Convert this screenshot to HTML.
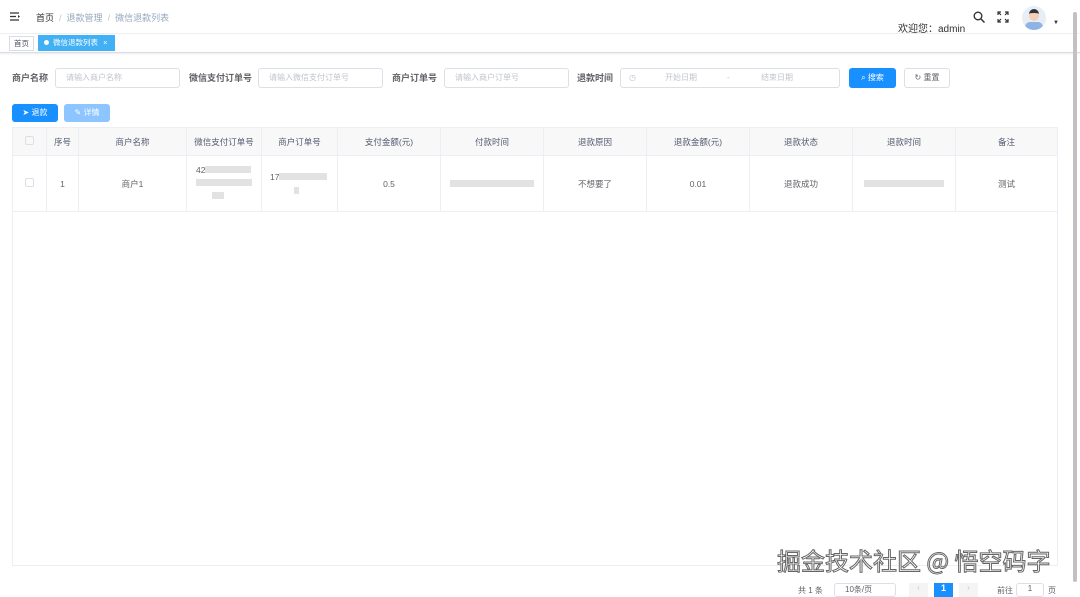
<!DOCTYPE html>
<html><head><meta charset="utf-8"><style>
*{margin:0;padding:0;box-sizing:border-box}
body{width:1080px;height:594px;overflow:hidden;background:#fff;font-family:"Liberation Sans","Noto Sans CJK SC",sans-serif;font-size:9px;color:#606266;position:relative}
.a{position:absolute}
.inp{position:absolute;height:20px;border:1px solid #dcdfe6;border-radius:3px;color:#c0c4cc;font-size:8px;line-height:18px;padding-left:10px}
.lbl{position:absolute;font-size:9px;font-weight:bold;color:#606266;line-height:20px}
table{position:absolute;left:12px;top:127px;border-collapse:collapse;width:1046px;font-size:8.5px}
td,th{border:1px solid #ebeef5;text-align:center;font-weight:normal}
th{height:28px;background:#f8f8f9;color:#515a6e}
td{height:56px}
.blur{display:inline-block;height:7px;background:#e2e2e2}
</style></head><body>
<div class="a" style="left:0;top:0;width:1080px;height:34px;border-bottom:1px solid #f0f0f0"></div>
<svg class="a" style="left:10px;top:12px" width="11" height="9"><path d="M0 1h9M0 4.5h6M0 8h9" stroke="#333" stroke-width="1.3"/><path d="M8 3l2 1.5-2 1.5z" fill="#333"/></svg>
<div class="a" style="left:36px;top:11px;font-size:9px;color:#303133">首页 <span style="color:#c0c4cc">&nbsp;/&nbsp;</span> <span style="color:#97a8be">退款管理</span> <span style="color:#c0c4cc">&nbsp;/&nbsp;</span> <span style="color:#97a8be">微信退款列表</span></div>
<div class="a" style="left:898px;top:20px;font-size:10px;color:#303133">欢迎您：admin</div>
<svg class="a" style="left:973px;top:11px" width="12" height="12"><circle cx="5" cy="5" r="3.8" stroke="#333" stroke-width="1.4" fill="none"/><path d="M8 8l3.5 3.5" stroke="#333" stroke-width="1.5"/></svg>
<svg class="a" style="left:997px;top:11px" width="12" height="12"><path d="M1 4V1h3M8 1h3v3M11 8v3H8M4 11H1V8M1 1l3 3M11 1L8 4M11 11L8 8M1 11l3-3" stroke="#333" stroke-width="1.2" fill="none"/></svg>
<div class="a" style="left:1022px;top:6px;width:24px;height:24px;border-radius:50%;background:#e8eef6;overflow:hidden"><div class="a" style="left:7px;top:3px;width:10px;height:12px;border-radius:5px;background:#f3d1b8;border-top:4px solid #333"></div><div class="a" style="left:3px;top:16px;width:18px;height:10px;border-radius:8px;background:#8fb4e3"></div></div>
<div class="a" style="left:1053px;top:20px;font-size:6px;color:#333">▼</div>
<div class="a" style="left:0;top:34px;width:1080px;height:19px;border-bottom:1px solid #d8dce5;box-shadow:0 1px 2px rgba(0,0,0,.08)"></div>
<div class="a" style="left:9px;top:36px;height:15px;padding:0 4px;border:1px solid #d8dce5;font-size:7.5px;line-height:13px;color:#495060">首页</div>
<div class="a" style="left:38px;top:35px;width:77px;height:16px;background:#42b0f5;color:#fff;font-size:7.5px;line-height:16px;padding-left:6px"><span style="display:inline-block;width:5px;height:5px;border-radius:50%;background:#fff;margin-right:4px"></span>微信退款列表 <span style="margin-left:3px">×</span></div>
<div class="lbl" style="left:12px;top:68px">商户名称</div>
<div class="inp" style="left:55px;top:68px;width:125px">请输入商户名称</div>
<div class="lbl" style="left:189px;top:68px">微信支付订单号</div>
<div class="inp" style="left:258px;top:68px;width:125px">请输入微信支付订单号</div>
<div class="lbl" style="left:392px;top:68px">商户订单号</div>
<div class="inp" style="left:444px;top:68px;width:125px">请输入商户订单号</div>
<div class="lbl" style="left:577px;top:68px">退款时间</div>
<div class="inp" style="left:620px;top:68px;width:220px;padding-left:8px">◷<span style="position:absolute;left:44px">开始日期</span><span style="position:absolute;left:106px">-</span><span style="position:absolute;left:140px">结束日期</span></div>
<div class="a" style="left:849px;top:68px;width:47px;height:20px;background:#1890ff;border-radius:3px;color:#fff;font-size:8px;line-height:20px;text-align:center">⌕ 搜索</div>
<div class="a" style="left:904px;top:68px;width:46px;height:20px;border:1px solid #dcdfe6;border-radius:3px;color:#606266;font-size:8px;line-height:18px;text-align:center">↻ 重置</div>
<div class="a" style="left:12px;top:104px;width:46px;height:18px;background:#1890ff;border-radius:3px;color:#fff;font-size:8px;line-height:18px;text-align:center">➤ 退款</div>
<div class="a" style="left:64px;top:104px;width:46px;height:18px;background:#8cc5ff;border-radius:3px;color:#fff;font-size:8px;line-height:18px;text-align:center">✎ 详情</div>
<div class="a" style="left:12px;top:127px;width:1046px;height:439px;border:1px solid #ebeef5"></div>
<table>
<tr><th style="width:34px"><span style="display:inline-block;width:9px;height:9px;border:1px solid #dcdfe6;border-radius:2px"></span></th><th style="width:32px">序号</th><th style="width:108px">商户名称</th><th style="width:75px">微信支付订单号</th><th style="width:76px">商户订单号</th><th style="width:103px">支付金额(元)</th><th style="width:103px">付款时间</th><th style="width:103px">退款原因</th><th style="width:103px">退款金额(元)</th><th style="width:103px">退款状态</th><th style="width:103px">退款时间</th><th>备注</th></tr>
<tr><td><span style="display:inline-block;width:9px;height:9px;border:1px solid #dcdfe6;border-radius:2px"></span></td><td>1</td><td>商户1</td>
<td style="text-align:left;padding-left:9px;line-height:13px">42<span class="blur" style="width:46px"></span><br><span class="blur" style="width:56px"></span><br><span class="blur" style="width:12px;margin-left:16px"></span></td>
<td style="text-align:left;padding-left:8px;line-height:14px">17<span class="blur" style="width:48px"></span><br><span class="blur" style="width:5px;margin-left:24px"></span></td>
<td>0.5</td><td><span class="blur" style="width:84px"></span></td><td>不想要了</td><td>0.01</td><td>退款成功</td><td><span class="blur" style="width:80px"></span></td><td>测试</td></tr>
</table>
<div class="a" style="left:777px;top:545px;font-size:24px;color:#fff;-webkit-text-stroke:1px #666;font-family:'Noto Sans CJK SC',sans-serif;line-height:30px">掘金技术社区 @ 悟空码字</div>
<div class="a" style="left:798px;top:585px;font-size:8px;color:#606266">共 1 条</div>
<div class="a" style="left:834px;top:583px;width:62px;height:14px;border:1px solid #dcdfe6;border-radius:3px;font-size:8px;padding-left:10px;line-height:12px">10条/页</div>
<div class="a" style="left:909px;top:583px;width:19px;height:14px;background:#f4f4f5;color:#c0c4cc;text-align:center;font-size:8px">‹</div>
<div class="a" style="left:934px;top:583px;width:19px;height:14px;background:#1890ff;color:#fff;text-align:center;font-size:9px;font-weight:bold">1</div>
<div class="a" style="left:959px;top:583px;width:19px;height:14px;background:#f4f4f5;color:#c0c4cc;text-align:center;font-size:8px">›</div>
<div class="a" style="left:997px;top:585px;font-size:8px">前往</div>
<div class="a" style="left:1016px;top:583px;width:28px;height:14px;border:1px solid #dcdfe6;border-radius:3px;text-align:center;font-size:8px">1</div>
<div class="a" style="left:1048px;top:585px;font-size:8px">页</div>
<div class="a" style="left:1073px;top:12px;width:4px;height:570px;background:#c1c1c1;border-radius:2px"></div>
</body></html>
